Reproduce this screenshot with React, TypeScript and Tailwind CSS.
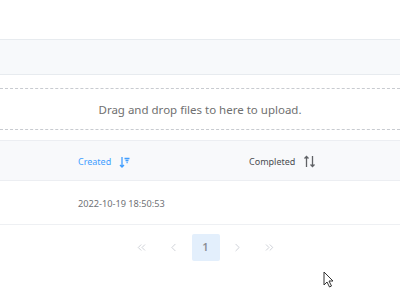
import { ChevronsLeft, ChevronLeft, ChevronRight, ChevronsRight } from 'lucide-react';

function SortDesc() {
  return (
    <svg width="11" height="12" viewBox="0 0 11 12" fill="none" stroke="#409eff" strokeWidth="1.3">
      <path d="M3 1v10M1 9l2 2 2-2" />
      <path d="M5.5 2.5h5M6.5 4.5h3M7.5 6.5h1.2" />
    </svg>
  );
}

function SortBoth() {
  return (
    <svg width="13" height="13" viewBox="0 0 13 13" fill="none" stroke="#606266" strokeWidth="1.3">
      <path d="M3.5 12V1.5M1.5 3.5l2-2 2 2" />
      <path d="M9.5 1v10.5M7.5 9.5l2 2 2-2" />
    </svg>
  );
}

function Cursor() {
  return (
    <svg width="12" height="18" viewBox="0 0 12 18" className="absolute left-[323px] top-[271px]">
      <path d="M1 1v13l3-3 2.5 5 2-1-2.5-5H10z" fill="#fff" stroke="#333" strokeWidth="1" strokeLinejoin="round" />
    </svg>
  );
}

export default function App() {
  return (
    <div className="relative h-[300px] w-[400px] overflow-hidden bg-white font-['Noto_Sans',sans-serif] text-[#606266]">
      <div className="h-[39px]" />
      <div className="h-[36px] border-y border-[#e7ebef] bg-[#f7f9fb]" />
      <div className="h-[13px]" />
      <div className="flex h-[42px] items-center justify-center border-y border-dashed border-[#c8cbd0] pt-[1px] text-[11.5px] text-[#707070]">
        Drag and drop files to here to upload.
      </div>
      <div className="h-[10px]" />
      <div className="flex h-[41px] items-center border-y border-[#eceef2] bg-[#f8f9fb] pt-[2px] text-[9px]">
        <div className="flex w-[249px] items-center gap-[8px] pl-[78px] text-[#409eff]">
          Created <SortDesc />
        </div>
        <div className="flex items-center gap-[8px] text-[#4a4d52]">
          Completed <SortBoth />
        </div>
      </div>
      <div className="flex h-[44px] items-center border-b border-[#eef0f3] pl-[78px] pt-[3px] text-[9.2px] text-[#707276]">
        2022-10-19 18:50:53
      </div>
      <div className="flex h-[45px] items-center justify-center gap-[4px] pl-[11px] text-[#c0c4cc]">
        <span className="flex w-[28px] justify-center"><ChevronsLeft size={13} strokeWidth={1.4} /></span>
        <span className="flex w-[28px] justify-center"><ChevronLeft size={13} strokeWidth={1.4} /></span>
        <span className="flex h-[27px] w-[28px] items-center justify-center rounded-[2px] bg-[#e3effc] text-[11px] font-semibold text-[#8a8e95]">1</span>
        <span className="flex w-[28px] justify-center"><ChevronRight size={13} strokeWidth={1.4} /></span>
        <span className="flex w-[28px] justify-center"><ChevronsRight size={13} strokeWidth={1.4} /></span>
      </div>
      <Cursor />
    </div>
  );
}
